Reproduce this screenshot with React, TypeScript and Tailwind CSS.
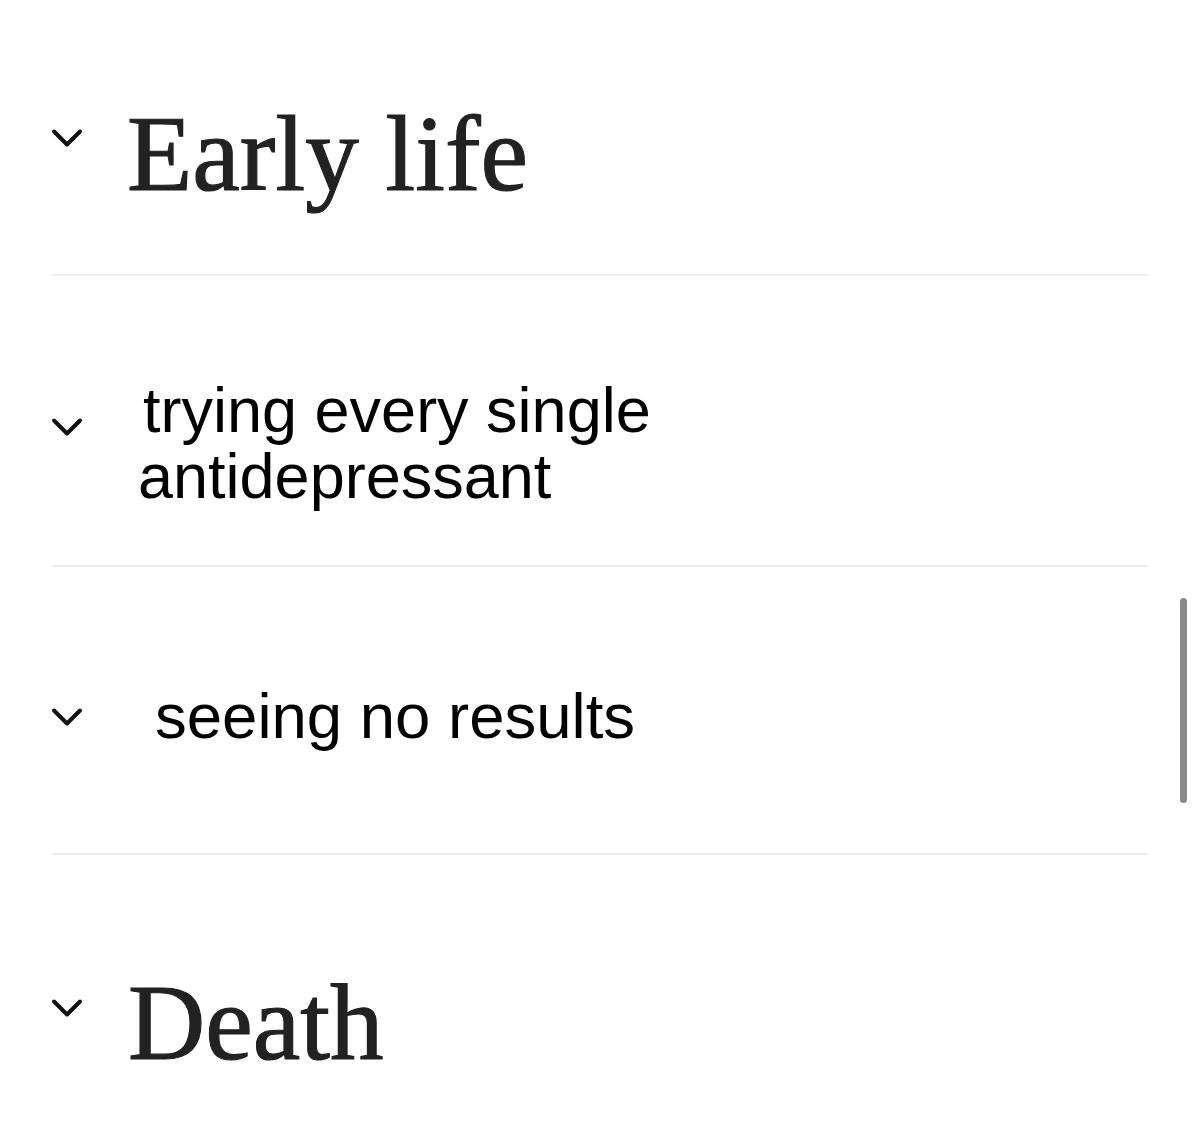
import React from "react";

const Chevron = ({ className = "" }: { className?: string }) => (
  <svg
    width="32"
    height="20"
    viewBox="0 0 32 20"
    fill="none"
    className={`shrink-0 ${className}`}
  >
    <polyline
      points="3,3.5 16,16.5 29,3.5"
      stroke="#111"
      strokeWidth="4"
      strokeLinecap="round"
      strokeLinejoin="round"
    />
  </svg>
);

const Divider = ({ className = "" }: { className?: string }) => (
  <div className={`h-[2px] bg-[#ebebeb] ${className}`} />
);

export default function App() {
  return (
    <div className="relative w-[1200px] h-[1140px] bg-white overflow-hidden">
      <div className="px-[52px]">
        {/* Early life */}
        <div className="flex items-start pt-[101px]">
          <Chevron className="mt-[27px] -ml-[1px]" />
          <h2 className="ml-[44px] text-[107px] leading-[106px] text-[#222] font-['Liberation_Serif',serif] [-webkit-text-stroke:1.2px_#222]">
            Early life
          </h2>
        </div>

        <Divider className="mt-[67px]" />

        {/* trying every single antidepressant */}
        <div className="flex items-start mt-[101px]">
          <Chevron className="mt-[40px] -ml-[1px]" />
          <p className="ml-[55px] text-[63px] leading-[66px] text-black font-['Liberation_Sans',Arial,sans-serif] indent-[5px]">
            trying every single
            <br />
            antidepressant
          </p>
        </div>

        <Divider className="mt-[56px]" />

        {/* seeing no results */}
        <div className="flex items-start mt-[116px]">
          <Chevron className="mt-[24px] -ml-[1px]" />
          <p className="ml-[72px] text-[63.5px] leading-[66px] text-black font-['Liberation_Sans',Arial,sans-serif]">
            seeing no results
          </p>
        </div>

        <Divider className="mt-[104px]" />

        {/* Death */}
        <div className="flex items-start mt-[115px]">
          <Chevron className="mt-[28px] -ml-[1px]" />
          <h2 className="ml-[45px] text-[107px] leading-[106px] text-[#222] font-['Liberation_Serif',serif] [-webkit-text-stroke:1.2px_#222]">
            Death
          </h2>
        </div>
      </div>

      {/* scrollbar thumb */}
      <div className="absolute left-[1180px] top-[598px] w-[7px] h-[205px] rounded-full bg-[#8a8a8a]" />
    </div>
  );
}
